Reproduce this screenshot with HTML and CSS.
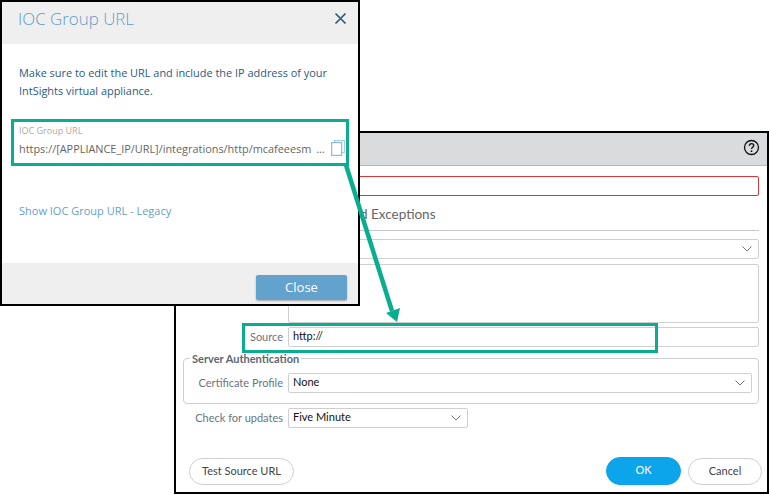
FILE: index.html
```html
<!DOCTYPE html>
<html lang="en">
<head>
<meta charset="utf-8">
<title>IOC Group URL</title>
<link rel="stylesheet" href="styles.css">
</head>
<body>
<div class="desk">
  <section class="win win-back">
    <header class="back-head">
      <svg class="help" width="17" height="17" viewBox="0 0 17 17"><circle cx="8.5" cy="8.5" r="7" fill="none" stroke="#111" stroke-width="1.3"/><path d="M6.400 6.800c0-3 4.300-2.800 4.300-.3 0 1.700-2.200 1.700-2.200 3.500" fill="none" stroke="#111" stroke-width="1.400"/><circle cx="8.500" cy="12.200" r=".9" fill="#111"/></svg>
    </header>
    <div class="back-body">
      <div class="name-row"><div class="field field-error"></div></div>
      <div class="section-title">General and Exceptions</div>
      <div class="rule"></div>
      <div class="form-row row-type"><div class="field select"><svg class="chev" width="10" height="6" viewBox="0 0 10 6"><path d="M.5.500l4.500 4.500 4.500-4.500" fill="none" stroke="#777" stroke-width="1"/></svg></div></div>
      <div class="form-row row-desc"><div class="field area"></div></div>
      <div class="form-row row-source"><span class="label">Source</span><div class="field">http://</div></div>
      <fieldset class="auth">
        <legend>Server Authentication</legend>
        <div class="form-row row-cert"><span class="label">Certificate Profile</span><div class="field select">None<svg class="chev" width="10" height="6" viewBox="0 0 10 6"><path d="M.5.500l4.500 4.500 4.500-4.500" fill="none" stroke="#777" stroke-width="1"/></svg></div></div>
      </fieldset>
      <div class="form-row row-check"><span class="label">Check for updates</span><div class="field select short">Five Minute<svg class="chev" width="10" height="6" viewBox="0 0 10 6"><path d="M.5.500l4.500 4.500 4.500-4.500" fill="none" stroke="#777" stroke-width="1"/></svg></div></div>
      <div class="actions">
        <button class="pill pill-test">Test Source URL</button>
        <span class="spacer"></span>
        <button class="pill pill-ok">OK</button>
        <button class="pill pill-cancel">Cancel</button>
      </div>
    </div>
  </section>

  <section class="win win-front">
    <header class="front-head">
      <h1>IOC Group URL</h1>
      <svg width="13" height="13" viewBox="0 0 13 13"><path d="M1.500 1.500l10 10M11.500 1.500l-10 10" fill="none" stroke="#2f5a7e" stroke-width="1.700"/></svg>
    </header>
    <div class="front-body">
      <p class="note">Make sure to edit the URL and include the IP address of your<br>IntSights virtual appliance.</p>
      <div class="url-block">
        <div class="url-label">IOC Group URL</div>
        <div class="url-row">
          <span class="url-text">https://[APPLIANCE_IP/URL]/integrations/http/mcafeeesm ...</span>
          <svg class="copy" width="14" height="16" viewBox="0 0 14 16"><path d="M3.500 2.500V.6h9.900v11.900h-2.400" fill="none" stroke="#a9cbe3" stroke-width="1.200"/><rect x=".6" y="2.600" width="10" height="12.800" fill="#fff" stroke="#8dbbdc" stroke-width="1.200"/></svg>
        </div>
      </div>
      <a class="legacy">Show IOC Group URL - Legacy</a>
    </div>
    <footer class="front-foot"><button class="close">Close</button></footer>
  </section>

  <div class="hl hl-url"></div>
  <div class="hl hl-source"></div>
  <svg class="arrow" width="80" height="170" viewBox="0 0 80 170"><path d="M3 0L49 146" fill="none" stroke="#0aad8f" stroke-width="4.500"/><path d="M43 148L57 143L54 157Z" fill="#0aad8f"/></svg>
</div>
</body>
</html>
```

FILE: styles.css
```css
* { box-sizing: border-box; }
html, body { margin: 0; padding: 0; background: #fff; }
.desk { position: relative; width: 769px; height: 495px; overflow: hidden; font-family: "Lato", sans-serif; }

.win { position: absolute; background: #fff; border: 2px solid #000; }
.win-front { left: 0; top: 0; width: 360px; height: 306px; display: flex; flex-direction: column; font-family: "Open Sans", sans-serif; }
.win-back { left: 174px; top: 131px; width: 595px; height: 363px; display: flex; flex-direction: column; }

.front-head { height: 42px; flex: none; background: #efefef; display: flex; align-items: center; justify-content: space-between; padding: 0 11px 9px 16px; }
.front-head h1 { margin: 0; font-size: 16.9px; font-weight: 300; color: #5f9cca; }
.front-body { flex: 1; padding: 20px 0 0 17px; display: flex; flex-direction: column; }
.note { margin: 0; font-size: 10.93px; line-height: 18px; color: #2c5a7f; }
.url-block { margin-top: 25px; }
.url-label { font-size: 9px; line-height: 12px; color: #aaa; }
.url-row { margin-top: 1px; display: flex; align-items: center; justify-content: space-between; padding-right: 13px; height: 20px; }
.url-text { font-size: 10.9px; word-spacing: 2px; color: #666; white-space: nowrap; }
.copy { flex: none; }
.legacy { margin-top: 45px; font-size: 11px; line-height: 15px; color: #659fcd; }
.front-foot { height: 41px; flex: none; background: #efefef; display: flex; align-items: flex-end; justify-content: flex-end; padding: 0 11px 4px 0; }
.close { width: 91px; height: 25px; border: 0; border-radius: 2px; background: #64a2ce; color: #fff; font: 13px "Open Sans", sans-serif; box-shadow: 0 1px 2px rgba(0,0,0,.3); padding: 0 0 2px; }

.back-head { height: 33px; flex: none; background: #dadbdd; border-bottom: 1px solid #b5b6b8; display: flex; align-items: center; justify-content: flex-end; padding: 0 7px 4px 0; }
.back-body { flex: 1; padding: 10px 8px 0 8px; display: flex; flex-direction: column; }

.field { flex: 1; height: 20px; border: 1px solid #cfcfcf; border-radius: 2px; font-size: 11px; line-height: 16px; color: #111; padding-left: 4px; position: relative; background: #fff; }
.field-error { border-color: #d9363e; }
.section-title { margin-top: 10px; padding-left: 112px; font-size: 13.500px; line-height: 16px; color: #666; }
.rule { margin-top: 8px; height: 1px; background: #c8c8c8; }
.form-row { display: flex; align-items: center; gap: 5px; }
.row-type { margin-top: 8px; padding-left: 104px; }
.row-desc { margin-top: 5px; padding-left: 104px; }
.area { height: 59px; }
.row-source { margin-top: 4px; }
.label { width: 99px; padding-bottom: 2px; text-align: right; font-size: 11px; color: #6a7580; flex: none; }
.select .chev { position: absolute; right: 6px; top: 6px; }
.auth { margin: 6px 0 0 -1px; padding: 0 6px 0 0; height: 51px; border: 1px solid #cfcfcf; border-radius: 4px; min-width: 0; }
.auth legend { margin-left: 6px; padding: 0 2px; font-size: 11px; line-height: 11px; font-weight: 700; color: #5b6875; }
.row-cert { margin-top: 9px; }
.row-check { margin-top: 4px; }
.short { flex: none; width: 180px; }
.actions { margin-top: 29px; display: flex; align-items: center; gap: 7px; padding: 0 0 0 5px; }
.spacer { flex: 1; }
.pill { height: 27px; border-radius: 14px; font: 11px "Lato", sans-serif; padding: 0 0 2px; background: #fff; border: 1px solid #cfcfcf; color: #444; }
.pill-test { width: 105px; }
.pill-ok { width: 75px; height: 28px; background: #0ca4ea; border-color: #0ca4ea; color: #fff; padding-bottom: 4px; }
.pill-cancel { width: 74px; margin-right: -3px; }

.hl { position: absolute; border: 3px solid #0aad8f; }
.hl-url { left: 11px; top: 119px; width: 338px; height: 47px; }
.hl-source { left: 242px; top: 323px; width: 416px; height: 30px; }
.arrow { position: absolute; left: 343px; top: 165px; }
```
